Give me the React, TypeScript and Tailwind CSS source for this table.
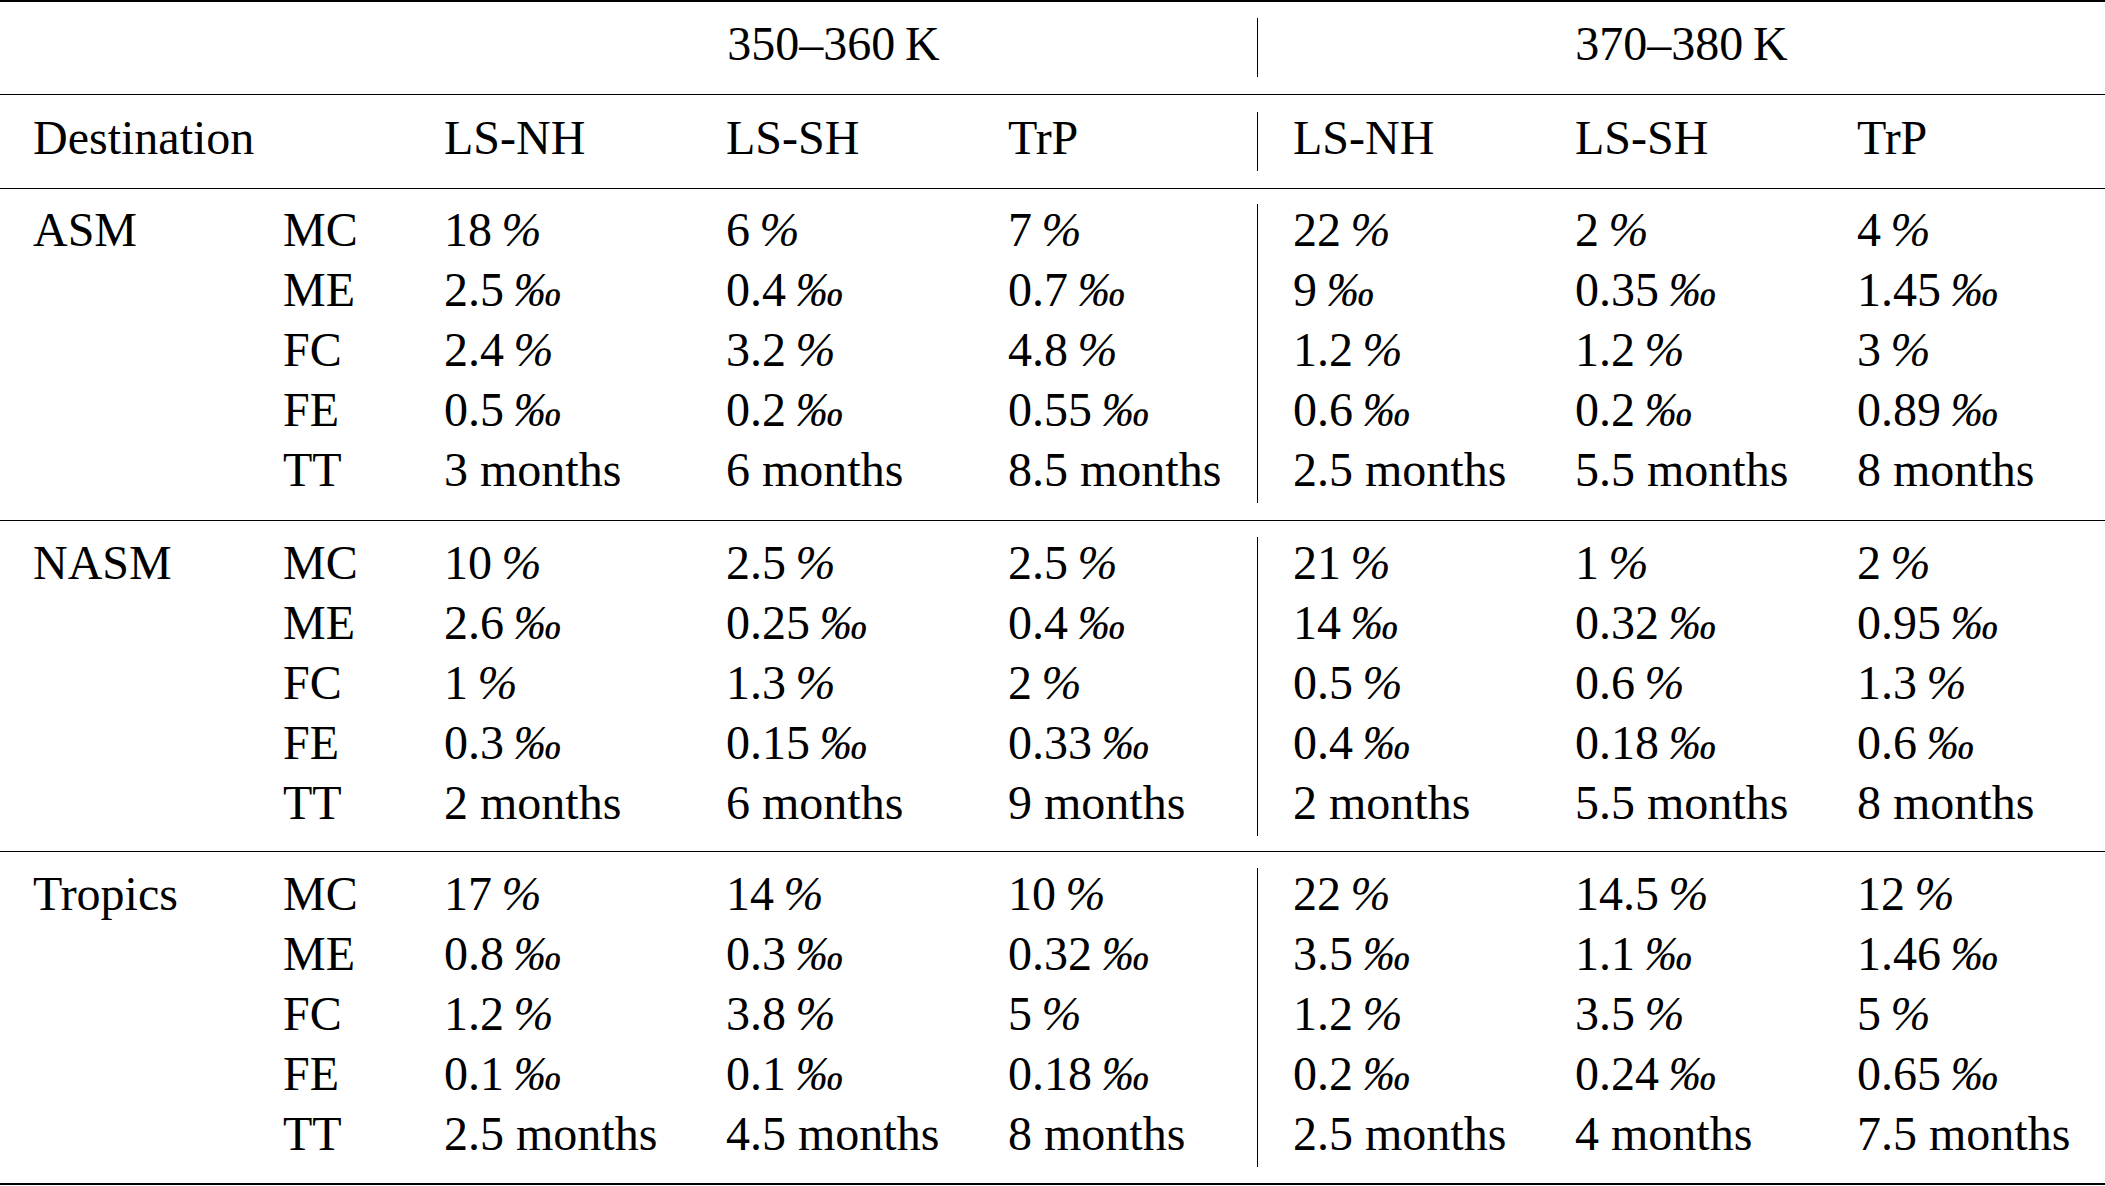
import React from 'react';

// =============================================================================
// TRANSPORT TABLE — destinations by source region, two theta layers
// =============================================================================

type Group = {
  name: string;
  rows: { metric: string; low: string[]; high: string[] }[];
};

const P = '\u2009%';
const M = '\u2009‰';

const GROUPS: Group[] = [
  {
    name: 'ASM',
    rows: [
      { metric: 'MC', low: [`18${P}`, `6${P}`, `7${P}`], high: [`22${P}`, `2${P}`, `4${P}`] },
      { metric: 'ME', low: [`2.5${M}`, `0.4${M}`, `0.7${M}`], high: [`9${M}`, `0.35${M}`, `1.45${M}`] },
      { metric: 'FC', low: [`2.4${P}`, `3.2${P}`, `4.8${P}`], high: [`1.2${P}`, `1.2${P}`, `3${P}`] },
      { metric: 'FE', low: [`0.5${M}`, `0.2${M}`, `0.55${M}`], high: [`0.6${M}`, `0.2${M}`, `0.89${M}`] },
      { metric: 'TT', low: ['3 months', '6 months', '8.5 months'], high: ['2.5 months', '5.5 months', '8 months'] },
    ],
  },
  {
    name: 'NASM',
    rows: [
      { metric: 'MC', low: [`10${P}`, `2.5${P}`, `2.5${P}`], high: [`21${P}`, `1${P}`, `2${P}`] },
      { metric: 'ME', low: [`2.6${M}`, `0.25${M}`, `0.4${M}`], high: [`14${M}`, `0.32${M}`, `0.95${M}`] },
      { metric: 'FC', low: [`1${P}`, `1.3${P}`, `2${P}`], high: [`0.5${P}`, `0.6${P}`, `1.3${P}`] },
      { metric: 'FE', low: [`0.3${M}`, `0.15${M}`, `0.33${M}`], high: [`0.4${M}`, `0.18${M}`, `0.6${M}`] },
      { metric: 'TT', low: ['2 months', '6 months', '9 months'], high: ['2 months', '5.5 months', '8 months'] },
    ],
  },
  {
    name: 'Tropics',
    rows: [
      { metric: 'MC', low: [`17${P}`, `14${P}`, `10${P}`], high: [`22${P}`, `14.5${P}`, `12${P}`] },
      { metric: 'ME', low: [`0.8${M}`, `0.3${M}`, `0.32${M}`], high: [`3.5${M}`, `1.1${M}`, `1.46${M}`] },
      { metric: 'FC', low: [`1.2${P}`, `3.8${P}`, `5${P}`], high: [`1.2${P}`, `3.5${P}`, `5${P}`] },
      { metric: 'FE', low: [`0.1${M}`, `0.1${M}`, `0.18${M}`], high: [`0.2${M}`, `0.24${M}`, `0.65${M}`] },
      { metric: 'TT', low: ['2.5 months', '4.5 months', '8 months'], high: ['2.5 months', '4 months', '7.5 months'] },
    ],
  },
];

// per-section vertical padding (top, bottom), matched to the rules
const SECTION_PAD = [
  'pt-[11px] pb-[20px]',
  'pt-[12px] pb-[18px]',
  'pt-[12px] pb-[19px]',
];

// Unit signs are set slanted, as in the typeset original
const Value: React.FC<{ v: string }> = ({ v }) => {
  const last = v.slice(-1);
  if (last === '%' || last === '‰') {
    return (
      <div>
        {v.slice(0, -1)}
        <span className="italic">{last}</span>
      </div>
    );
  }
  return <div>{v}</div>;
};

// Left half + vertical rule + right half of one block of rows
const Split: React.FC<{ left: React.ReactNode; right: React.ReactNode; className?: string }> = ({
  left,
  right,
  className,
}) => (
  <div className={`flex ${className ?? ''}`}>
    <div className="w-[1257px] shrink-0 pl-[33px]">{left}</div>
    <div className="w-px shrink-0 bg-black mt-[4px] -mb-[3px]" />
    <div className="flex-1 pl-[35px]">{right}</div>
  </div>
);

export default function App() {
  return (
    <div
      className="min-h-screen bg-white text-black text-[48px] leading-[60px]"
      style={{ fontFamily: '"Liberation Serif", "Times New Roman", serif' }}
    >
      <div className="border-t-2 border-b-2 border-black">
        {/* Header: theta layers */}
        <Split
          className="pt-[12px] pb-[20px]"
          left={
            <div className="flex">
              <div className="w-[411px]" />
              <div className="w-[779px] text-center whitespace-nowrap">350–360{'\u2009'}K</div>
            </div>
          }
          right={<div className="w-[777px] text-center whitespace-nowrap">370–380{'\u2009'}K</div>}
        />

        {/* Header: source regions */}
        <Split
          className="border-t border-black pt-[13px] pb-[20px]"
          left={
            <div className="grid grid-cols-[411px_282px_282px_1fr]">
              <div>Destination</div>
              <div>LS-NH</div>
              <div>LS-SH</div>
              <div>TrP</div>
            </div>
          }
          right={
            <div className="grid grid-cols-[282px_282px_1fr]">
              <div>LS-NH</div>
              <div>LS-SH</div>
              <div>TrP</div>
            </div>
          }
        />

        {GROUPS.map((group, gi) => (
          <Split
            key={group.name}
            className={`border-t border-black ${SECTION_PAD[gi]}`}
            left={group.rows.map((row, ri) => (
              <div key={row.metric} className="grid grid-cols-[250px_161px_282px_282px_1fr] whitespace-nowrap">
                <div>{ri === 0 ? group.name : ''}</div>
                <div>{row.metric}</div>
                {row.low.map((v, i) => (
                  <Value key={i} v={v} />
                ))}
              </div>
            ))}
            right={group.rows.map((row) => (
              <div key={row.metric} className="grid grid-cols-[282px_282px_1fr] whitespace-nowrap">
                {row.high.map((v, i) => (
                  <Value key={i} v={v} />
                ))}
              </div>
            ))}
          />
        ))}
      </div>
    </div>
  );
}
